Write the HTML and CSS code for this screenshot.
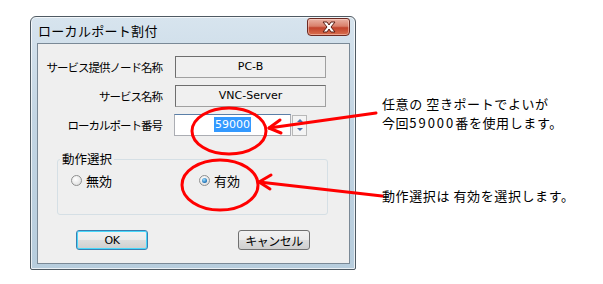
FILE: index.html
```html
<!DOCTYPE html>
<html>
<head>
<meta charset="UTF-8">
<title>ローカルポート割付</title>
<link rel="stylesheet" href="styles.css">
</head>
<body>

<!-- DIALOG -->
<div class="window">
  <div class="titlebar">
    <span class="title">ローカルポート割付</span>
    <span class="closebtn">
      <svg width="14" height="12" viewBox="0 0 14 12"><path d="M1 1h4l2 3 2-3h4l-4 5 4 5H9L7 8l-2 3H1l4-5z" fill="#fff" stroke="#5b1f15" stroke-width="1" stroke-linejoin="round"/></svg>
    </span>
  </div>

  <div class="client">
    <div class="form">
      <label>サービス提供ノード名称</label>
      <div class="field">PC-B</div>

      <label>サービス名称</label>
      <div class="field">VNC-Server</div>

      <label>ローカルポート番号</label>
      <div class="portrow">
        <div class="input"><span class="sel">59000</span></div>
        <div class="spin"><span class="up"></span><span class="down"></span></div>
      </div>
    </div>

    <fieldset class="group">
      <legend>動作選択</legend>
      <div class="radios">
        <span class="radio"><i></i>無効</span>
        <span class="radio checked"><i></i>有効</span>
      </div>
    </fieldset>

    <div class="buttons">
      <button class="okbtn">OK</button>
      <button>キャンセル</button>
    </div>
  </div>
</div>

<!-- ANNOTATIONS -->
<div class="note note1">任意の 空きポートでよいが<br>今回<span class="num">59000</span>番を使用します。</div>
<div class="note note2">動作選択は 有効を選択します。</div>

<svg class="marks" width="603" height="284" viewBox="0 0 603 284">
  <g fill="none" stroke="#f00" stroke-width="3" stroke-linecap="round" stroke-linejoin="round">
    <ellipse cx="229" cy="131" rx="37" ry="23"/>
    <ellipse cx="220" cy="185" rx="38" ry="25"/>
    <path d="M376 113 L269 128"/>
    <path d="M280 120 L269 128 L281 133"/>
    <path d="M382 196 L259 182"/>
    <path d="M271 175 L259 182 L270 189"/>
  </g>
</svg>

</body>
</html>
```

FILE: styles.css
```css
body{
  margin:0; width:603px; height:284px; overflow:hidden;
  background:#fff; position:relative;
  font-family:"Noto Sans CJK JP","Liberation Sans",sans-serif;
  font-size:12px; color:#000;
}

/* window frame */
.window{
  box-sizing:border-box;
  width:326px; height:254px;
  margin:16px 0 0 30px;
  border:1px solid #4f5a63;
  border-radius:6px 6px 2px 2px;
  background:linear-gradient(180deg,#d7e4ee 0%,#c3d5e3 40%,#b7cddd 100%);
  box-shadow:inset 0 0 0 1px rgba(255,255,255,.7);
  display:flex; flex-direction:column;
  padding:0 5px 5px 6px;
}
.titlebar{
  height:26px; display:flex; align-items:center; justify-content:space-between;
}
.title{font-size:13px; color:#000; margin-left:1px; letter-spacing:.3px}
.closebtn{
  box-sizing:border-box;
  width:43px; height:18px; margin:-7px 0 0 0;
  border:1px solid #6d2a22;
  border-radius:3px 3px 4px 4px;
  background:linear-gradient(180deg,#eab2a4 0%,#d9806b 45%,#c2432c 55%,#d9704f 100%);
  box-shadow:inset 0 0 0 1px rgba(255,220,210,.5);
  display:flex; align-items:center; justify-content:center;
}
.client{
  flex:1;
  background:#efefef;
  border:1px solid #7a8996;
  position:relative;
}

/* form rows */
.form{
  display:grid; grid-template-columns:124px 151px;
  column-gap:13px; row-gap:7px;
  margin-top:12px;
  align-items:center;
}
.form label{text-align:right; white-space:nowrap; font-size:11.5px; letter-spacing:-1px}
.field{
  height:20px; line-height:20px; text-align:center;
  border:1px solid #a0a0a0; border-top-color:#6e6e6e; border-left-color:#6e6e6e;
  background:#f0f0f0;
  font-family:"DejaVu Sans",sans-serif; font-size:11px;
}
.portrow{display:flex; align-items:center; gap:1px; margin-left:-1px}
.input{
  width:115px; height:20px; line-height:20px; text-align:center;
  border:1px solid #abadb3; border-top-color:#5a7fa8;
  background:#fff;
  font-family:"DejaVu Sans",sans-serif; font-size:11px;
}
.sel{background:#3399ff; color:#fff; padding:1px 1px}
.spin{
  width:13px; height:19px; border:1px solid #b8b8b8;
  background:#f4f4f4; display:flex; flex-direction:column;
  align-items:center; justify-content:space-around;
}
.up,.down{width:0;height:0;border-left:3px solid transparent;border-right:3px solid transparent}
.up{border-bottom:3px solid #4a6ea8}
.down{border-top:3px solid #4a6ea8}

/* group box */
.group{
  margin:17px 0 0 19px; width:268px; height:62px;
  box-sizing:border-box;
  border:1px solid #d5dfe5; border-radius:3px;
  padding:0;
  font-size:12.5px;
}
.group legend{padding:0 2px; margin-left:2px; line-height:12px}
.radios{display:flex; padding:6px 0 0 13px; font-size:13px}
.radio{display:flex; align-items:center; gap:4px; width:128px}
.radio i{
  width:11px; height:11px; border-radius:50%;
  border:1px solid #8e8f8f;
  background:radial-gradient(circle at 40% 35%,#fff,#d8d8d8);
  box-sizing:border-box; position:relative;
}
.checked i::after{
  content:""; position:absolute; left:2px; top:2px;
  width:5px; height:5px; border-radius:50%;
  background:radial-gradient(circle at 40% 35%,#9fe0ff,#1c6fb5 70%,#0e4c87);
}

/* buttons */
.buttons{display:flex; gap:90px; margin:15px 0 0 38px}
button{
  width:72px; height:20px; padding:0;
  border:1px solid #707070; border-radius:3px;
  background:linear-gradient(180deg,#f2f2f2 0%,#ebebeb 50%,#dddddd 51%,#cfcfcf 100%);
  font-family:"Noto Sans CJK JP","Liberation Sans",sans-serif; font-size:12px; color:#000;
  letter-spacing:-.5px;
}
.okbtn{
  border-color:#3c7fb1;
  box-shadow:inset 0 0 0 1px #48d8fb;
  font-family:"DejaVu Sans",sans-serif; font-size:11px;
}

/* annotations */
.note{
  position:absolute; left:382px;
  font-size:13px; line-height:19px; letter-spacing:.6px; white-space:nowrap;
}
.num{letter-spacing:2px}
.note1{top:94px}
.note2{top:186px}
.marks{position:absolute; left:0; top:0}
```
